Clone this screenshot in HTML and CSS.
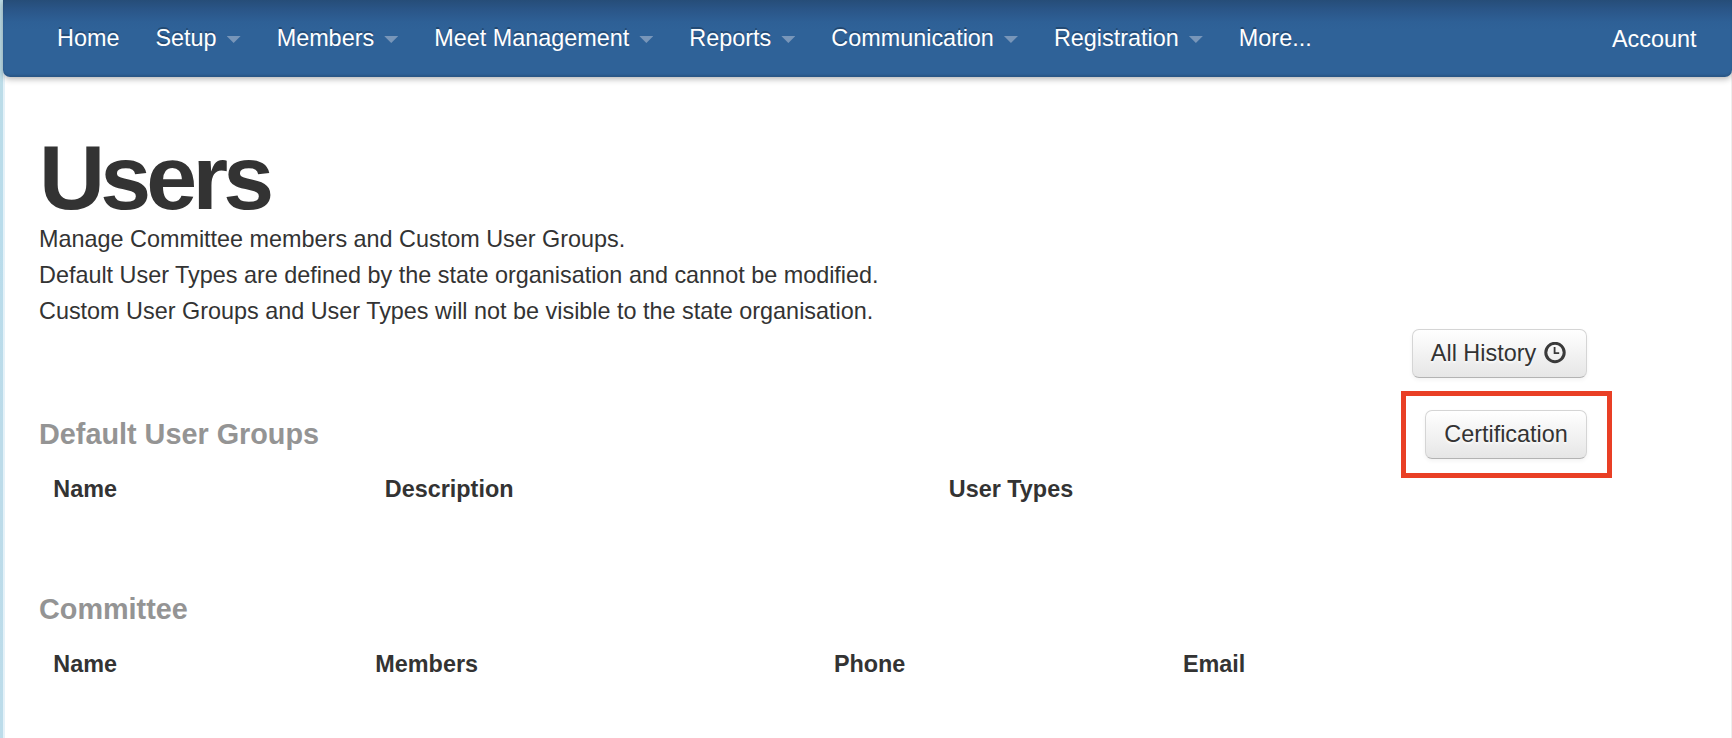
FILE: index.html
```html
<!DOCTYPE html>
<html lang="en">
<head>
<meta charset="utf-8">
<title>Users</title>
<link rel="stylesheet" href="styles.css">
</head>
<body>
<div class="page">
  <nav class="navbar">
    <ul class="nav">
      <li><a>Home</a></li>
      <li><a>Setup<b class="caret"></b></a></li>
      <li><a>Members<b class="caret"></b></a></li>
      <li><a>Meet Management<b class="caret"></b></a></li>
      <li><a>Reports<b class="caret"></b></a></li>
      <li><a>Communication<b class="caret"></b></a></li>
      <li><a>Registration<b class="caret"></b></a></li>
      <li><a>More...</a></li>
    </ul>
    <a class="account">Account</a>
  </nav>
  <div class="content">
    <main class="main">
      <h1>Users</h1>
      <p class="intro">Manage Committee members and Custom User Groups.<br>Default User Types are defined by the state organisation and cannot be modified.<br>Custom User Groups and User Types will not be visible to the state organisation.</p>
      <section class="group">
        <h2>Default User Groups</h2>
        <div class="columns columns-groups"><span>Name</span><span>Description</span><span>User Types</span></div>
      </section>
      <section class="group">
        <h2>Committee</h2>
        <div class="columns columns-committee"><span>Name</span><span>Members</span><span>Phone</span><span>Email</span></div>
      </section>
    </main>
    <aside class="actions">
      <a class="btn btn-history">All History
        <svg class="clock" viewBox="0 0 22 22" width="22" height="22"><circle cx="11" cy="10.5" r="9.2" fill="none" stroke="#3a3a3a" stroke-width="3"/><path d="M10.6 5v6.2h4.6" fill="none" stroke="#3a3a3a" stroke-width="1.8"/></svg>
      </a>
      <div class="callout"><a class="btn">Certification</a></div>
    </aside>
  </div>
</div>
</body>
</html>
```
FILE: styles.css
```css
* { box-sizing: border-box; }
body {
  margin: 0;
  height: 738px;
  overflow: hidden;
  background: linear-gradient(#bddce6, #b9dceb 30%, #bcdbe9 60%, #bcdcea);
  color: #333;
  font: 23.4px/36px "Liberation Sans", Arial, sans-serif;
}
.page {
  height: 738px;
  margin-left: 3px;
  border-left: 2px solid #e4f1f8;
  border-right: 1px solid #eee;
  background: #fff;
}
.navbar {
  display: flex;
  justify-content: space-between;
  height: 77px;
  margin: 0 -1px 0 -2px;
  padding: 0 35.5px 0 36px;
  border-radius: 0 0 7px 7px;
  background: linear-gradient(#264d78, #2a5587 9px, #2e6096 22px, #2f6298 30px);
  box-shadow: 0 2px 6px rgba(0, 0, 0, .3), inset 0 -2px 2px rgba(0, 0, 0, .12);
  color: #fff;
}
.nav {
  display: flex;
  margin: 0;
  padding: 0;
  list-style: none;
}
.nav a {
  display: flex;
  padding: 20px 18px;
  text-shadow: 0 -2px 0 rgba(0, 0, 0, .25);
}
.caret {
  width: 14px;
  height: 7px;
  margin: 16px 0 0 10.1px;
  background: #7896b9;
  clip-path: polygon(0 0, 100% 0, 50% 100%);
}
.account { padding-top: 21px; }
.content { display: flex; padding-left: 34px; }
.main { width: 1362px; }
h1 {
  margin: 56px 0 0;
  font-size: 91.5px;
  line-height: 88px;
  letter-spacing: -4.8px;
}
.intro { margin: 0; }
.group { margin-bottom: 49px; }
.intro + .group { margin-top: 80px; }
h2 {
  margin: 0;
  color: #949494;
  font-size: 28.8px;
  line-height: 50px;
}
.columns {
  display: grid;
  padding: 12px 0 28px 14.3px;
  font-weight: bold;
}
.columns-groups { grid-template-columns: 331.5px 564px auto; }
.columns-committee { grid-template-columns: 322px 458.6px 349px auto; }
.actions {
  display: flex;
  flex-direction: column;
  align-items: flex-end;
  gap: 13px;
  width: 211px;
  padding-top: 252px;
}
.btn {
  display: flex;
  align-items: center;
  justify-content: center;
  width: 162px;
  height: 49px;
  padding-bottom: 2px;
  border: 1px solid #d5d5d5;
  border-bottom-color: #b3b3b3;
  border-radius: 7px;
  background: linear-gradient(#fff, #e6e6e6);
  box-shadow: 0 2px 4px rgba(0, 0, 0, .05);
  text-shadow: 0 2px 2px rgba(255, 255, 255, .75);
  white-space: nowrap;
}
.btn-history { width: 175px; margin-right: 25px; padding-right: 2px; gap: 8px; }
.clock { flex: none; }
.callout {
  width: 211px;
  padding: 14px 20px 14px 19px;
  border: 5px solid #e93f25;
}
```
